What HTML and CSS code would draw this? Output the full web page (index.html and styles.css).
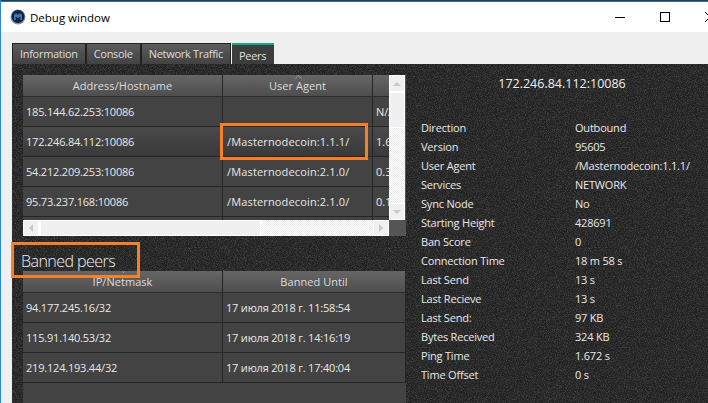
FILE: index.html
```html
<!DOCTYPE html>
<html lang="en">
<head>
<meta charset="utf-8">
<title>Debug window</title>
<link rel="stylesheet" href="styles.css">
</head>
<body>
<div class="window">
  <header class="titlebar">
    <svg class="app-icon" width="16" height="16" viewBox="0 0 16 16"><circle cx="8" cy="8" r="7.5" fill="#8a93a3"/><circle cx="8" cy="7.5" r="6.5" fill="#10233f"/><path d="M4 11V6.5C4 4.8 5.5 4 6.6 4.6L8 6l1.400-1.400C10.500 4 12 4.800 12 6.500V11h-1.800V7.500L8 9.200 5.800 7.500V11z" fill="#3f78b5"/></svg>
    <span class="title-text">Debug window</span>
    <div class="controls">
      <span class="ctl-min"></span>
      <span class="ctl-max"></span>
      <svg class="ctl-close" width="10" height="10" viewBox="0 0 10 10"><path d="M0 0L10 10M10 0L0 10" stroke="#000" stroke-width="1" fill="none"/></svg>
    </div>
  </header>
  <nav class="tabs">
    <span class="tab">Information</span>
    <span class="tab">Console</span>
    <span class="tab">Network Traffic</span>
    <span class="tab tab-active">Peers</span>
  </nav>
  <main class="panel">
    <section class="left">
      <div class="peers">
        <div class="peers-main">
          <div class="viewport">
            <div class="row head peers-cols">
              <div class="cell">Address/Hostname</div>
              <div class="cell sorted">User Agent</div>
              <div class="cell">Ping</div>
            </div>
            <div class="row peers-cols"><div class="cell num">185.144.62.253:10086</div><div class="cell"></div><div class="cell">N/A</div></div>
            <div class="row peers-cols row-grad"><div class="cell num">172.246.84.112:10086</div><div class="cell agent">/Masternodecoin:1.1.1/</div><div class="cell">1.672 s</div></div>
            <div class="row peers-cols"><div class="cell num">54.212.209.253:10086</div><div class="cell agent">/Masternodecoin:2.1.0/</div><div class="cell">0.312 s</div></div>
            <div class="row peers-cols"><div class="cell num">95.73.237.168:10086</div><div class="cell agent">/Masternodecoin:2.1.0/</div><div class="cell">0.187 s</div></div>
            <div class="row peers-cols"><div class="cell"></div><div class="cell"></div><div class="cell"></div></div>
          </div>
          <div class="hscroll">
            <span class="sb-btn"><i class="arrow arrow-left"></i></span>
            <span class="h-thumb"></span>
            <span class="h-track"></span>
            <span class="sb-btn"><i class="arrow arrow-right"></i></span>
          </div>
        </div>
        <div class="vscroll">
          <span class="sb-btn-v"><i class="arrow arrow-up"></i></span>
          <span class="v-thumb"></span>
          <span class="v-track"></span>
          <span class="sb-btn-v"><i class="arrow arrow-down"></i></span>
          <span class="corner"></span>
        </div>
      </div>
      <h2 class="banned-title">Banned peers</h2>
      <div class="banned">
        <div class="row head banned-cols">
          <div class="cell sorted-down">IP/Netmask</div>
          <div class="cell">Banned Until</div>
        </div>
        <div class="row banned-cols"><div class="cell num">94.177.245.16/32</div><div class="cell num">17 июля 2018 г. 11:58:54</div></div>
        <div class="row banned-cols"><div class="cell num">115.91.140.53/32</div><div class="cell num">17 июля 2018 г. 14:16:19</div></div>
        <div class="row banned-cols"><div class="cell num">219.124.193.44/32</div><div class="cell num">17 июля 2018 г. 17:40:04</div></div>
      </div>
    </section>
    <section class="right">
      <h3 class="peer-title">172.246.84.112:10086</h3>
      <dl class="details">
        <dt>Direction</dt><dd>Outbound</dd>
        <dt>Version</dt><dd>95605</dd>
        <dt>User Agent</dt><dd>/Masternodecoin:1.1.1/</dd>
        <dt>Services</dt><dd>NETWORK</dd>
        <dt>Sync Node</dt><dd>No</dd>
        <dt>Starting Height</dt><dd>428691</dd>
        <dt>Ban Score</dt><dd>0</dd>
        <dt>Connection Time</dt><dd>18 m 58 s</dd>
        <dt>Last Send</dt><dd>13 s</dd>
        <dt>Last Recieve</dt><dd>13 s</dd>
        <dt>Last Send:</dt><dd>97 KB</dd>
        <dt>Bytes Received</dt><dd>324 KB</dd>
        <dt>Ping Time</dt><dd>1.672 s</dd>
        <dt>Time Offset</dt><dd>0 s</dd>
      </dl>
    </section>
  </main>
  <div class="mark mark-agent"></div>
  <div class="mark mark-banned"></div>
</div>
</body>
</html>
```
FILE: styles.css
```css
* { box-sizing: border-box; }
html, body { margin: 0; padding: 0; }
body {
  width: 708px;
  height: 403px;
  overflow: hidden;
  background: #efefef;
  font-family: "Open Sans", sans-serif;
  font-size: 11px;
  color: #e8e8e8;
}
.window {
  position: relative;
  width: 708px;
  height: 403px;
  overflow: hidden;
  border-left: 1px solid #2b87d8;
  display: flex;
  flex-direction: column;
}
.window::before {
  content: "";
  display: block;
  height: 2px;
  flex: none;
  background: linear-gradient(#3a3a3a 50%, #2a6ea8 50%);
}
.titlebar {
  flex: none;
  height: 30px;
  background: #fff;
  display: flex;
  align-items: center;
  padding-left: 9px;
  color: #000;
  font-size: 11.5px;
}
.app-icon { flex: none; margin-right: 4px; }
.controls {
  margin-left: auto;
  display: flex;
  align-items: center;
  width: 147px;
  flex: none;
}
.ctl-min { flex: none; width: 10px; height: 1px; background: #000; margin-left: 54px; }
.ctl-max { flex: none; width: 10px; height: 10px; border: 1px solid #000; margin-left: 35px; }
.ctl-close { margin-left: 35px; flex: none; }
.tabs {
  flex: none;
  height: 32px;
  display: flex;
  align-items: flex-end;
  padding-left: 11px;
}
.tab {
  height: 21px;
  padding: 0 7px;
  line-height: 19px;
  letter-spacing: -.3px;
  background: linear-gradient(#5c5c5c, #424242);
  border: 1px solid #222;
  border-bottom: 0;
  color: #ddd;
}
.tab-active {
  height: 21px;
  margin-left: 1px;
  background: #3d3d3d;
  border: 0;
  border-top: 2px solid #12a88a;
  line-height: 21px;
  padding: 0 8px 0 7px;
}
.panel {
  flex: 1;
  min-height: 0;
  margin-left: 11px;
  display: flex;
  padding: 11px 0 0 11px;
  background-color: #222;
  background-image: url("data:image/svg+xml,%3Csvg xmlns='http://www.w3.org/2000/svg' width='200' height='200'%3E%3Cfilter id='n'%3E%3CfeTurbulence type='fractalNoise' baseFrequency='1.1' numOctaves='2' stitchTiles='stitch'/%3E%3CfeColorMatrix values='0 0 0 0 1 0 0 0 0 1 0 0 0 0 1 1.1 0 0 0 -0.45'/%3E%3C/filter%3E%3Crect width='200' height='200' filter='url(%23n)' opacity='.35'/%3E%3C/svg%3E");
}
.left { flex: none; width: 383px; display: flex; flex-direction: column; }
.peers { flex: none; height: 161px; display: flex; }
.peers-main { flex: none; width: 366px; display: flex; flex-direction: column; }
.viewport { height: 145px; overflow: hidden; background: #444; }
.row { display: grid; height: 30px; border-bottom: 1px solid #262626; background: #434343; }
.row-grad { background: linear-gradient(#4a4a4a, #3a3a3a); }
.head {
  height: 22px;
  background: linear-gradient(#666, #4e4e4e);
  border-bottom: 1px solid #2c2c2c;
  color: #dcdcdc;
}
.peers-cols { grid-template-columns: 200px 150px 60px; width: 410px; }
.banned-cols { grid-template-columns: 200px 183px; }
.cell {
  border-right: 1px solid #262626;
  padding-left: 3px;
  line-height: 29px;
  white-space: nowrap;
  overflow: hidden;
  position: relative;
}
.num { letter-spacing: -.2px; }
.agent { padding-left: 4px; letter-spacing: .15px; }
.head .cell { text-align: center; line-height: 21px; padding: 0; letter-spacing: .05px; }
.sorted::before, .sorted-down::before {
  content: "";
  position: absolute;
  left: 50%;
  width: 6px;
  height: 6px;
  margin-left: -3px;
  border-left: 1px solid #999;
  border-top: 1px solid #999;
  transform: rotate(45deg) scale(.7);
}
.sorted::before { top: 0; }
.sorted-down::before { top: -5px; transform: rotate(225deg) scale(.7); }
.hscroll { height: 16px; display: flex; background: #fff; }
.sb-btn, .sb-btn-v {
  flex: none;
  background: #f0f0f0;
  border: 1px solid #fff;
  display: flex;
  align-items: center;
  justify-content: center;
}
.sb-btn { width: 16px; }
.sb-btn-v { height: 17px; }
.h-thumb { flex: none; width: 221px; background: #f0f0f0; border: 1px solid #fff; margin-left: 1px; }
.h-track, .v-track {
  flex: 1;
  background-color: #fff;
  background-image: repeating-conic-gradient(#ececec 0 25%, #fff 0 50%);
  background-size: 2px 2px;
}
.vscroll { flex: none; width: 17px; display: flex; flex-direction: column; background: #555; border-right: 1px solid #555; }
.v-thumb { flex: none; height: 36px; background: #f0f0f0; border: 1px solid #fff; }
.corner { flex: none; height: 16px; background: #555; }
.arrow { display: block; width: 0; height: 0; border: 4px solid transparent; }
.arrow-up { border-bottom-color: #c8c8c8; margin-top: -4px; }
.arrow-down { border-top-color: #c8c8c8; margin-top: 4px; }
.arrow-left { border-right-color: #c8c8c8; margin-left: -4px; }
.arrow-right { border-left-color: #c8c8c8; margin-right: -4px; }
.banned-title {
  flex: none;
  height: 35px;
  margin: 0 0 0 -2px;
  padding-top: 13px;
  font-size: 16px;
  letter-spacing: -.55px;
  line-height: 25px;
  font-weight: 300;
  color: #f0f0f0;
}
.banned { flex: 1; background: #434343; }
.right { flex: 1; padding-left: 15px; }
.peer-title {
  margin: 0;
  width: 282px;
  text-align: center;
  font-size: 12.5px;
  font-weight: 400;
  line-height: 18px;
  color: #eee;
}
.details {
  margin: 25px 0 0;
  display: grid;
  grid-template-columns: 154px 1fr;
  grid-auto-rows: 19px;
  line-height: 19px;
  letter-spacing: -.2px;
}
.details dd { margin: 0; }
.mark { position: absolute; border: 3px solid #f77f27; }
.mark-agent { left: 219px; top: 123px; width: 148px; height: 37px; }
.mark-banned { left: 10px; top: 242px; width: 129px; height: 36px; }
```
